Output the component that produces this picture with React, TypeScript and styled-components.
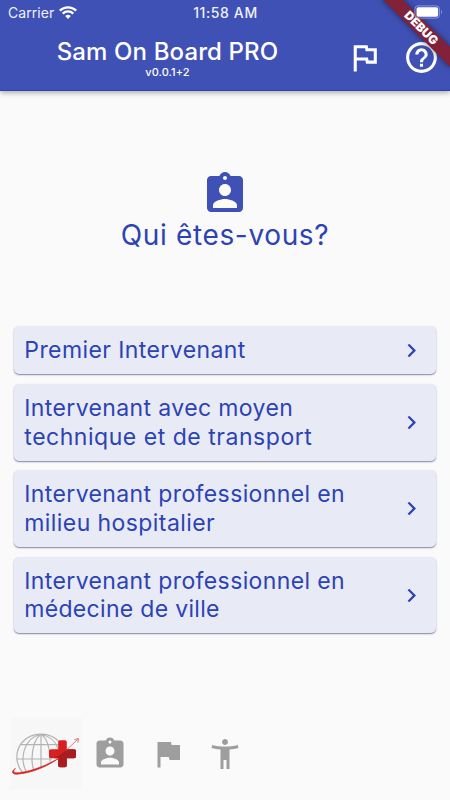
import React from "react";
import styled, { createGlobalStyle } from "styled-components";

const indigo = "#3f51b5";
const ink = "#2c43b4";

const GlobalStyle = createGlobalStyle`
  * { box-sizing: border-box; }
  body { margin: 0; background: #fafafa; font-family: Inter, "Liberation Sans", sans-serif; }
`;

const Screen = styled.div`
  width: 450px;
  height: 800px;
  position: relative;
  overflow: hidden;
  display: flex;
  flex-direction: column;
  background: #fafafa;
`;

const Header = styled.header`
  height: 91px;
  flex: none;
  background: ${indigo};
  color: #fff;
  border-bottom: 1px solid #2b44b2;
  box-shadow: 0 2px 5px rgba(0, 0, 0, 0.3);
`;

const StatusBar = styled.div`
  height: 24px;
  padding: 1px 7px 0 8px;
  display: grid;
  grid-template-columns: 1fr auto 1fr;
  align-items: center;
  color: #eef0fb;
  font-size: 14px;
  line-height: 24px;
`;

const Carrier = styled.div`
  display: flex;
  align-items: center;
  gap: 5px;
  letter-spacing: 0.05px;
`;

const Clock = styled.div`
  font-weight: 500;
  font-size: 14px;
  letter-spacing: 0.6px;
`;

const BatterySlot = styled.div`
  display: flex;
  justify-content: flex-end;
  position: relative;
  z-index: 3;
  top: -1px;
`;

const TitleBar = styled.div`
  height: 66px;
  display: flex;
`;

const Titles = styled.div`
  width: 335px;
  padding-top: 13px;
  display: flex;
  flex-direction: column;
  align-items: center;
`;

const Title = styled.h1`
  margin: 0;
  font-size: 24px;
  line-height: 29px;
  font-weight: 500;
  letter-spacing: 0.12px;
  white-space: nowrap;
`;

const Version = styled.div`
  font-size: 11px;
  line-height: 13px;
  font-weight: 500;
  letter-spacing: 0.1px;
`;

const Actions = styled.div`
  display: flex;
  gap: 20px;
  padding: 15px 0 0 11px;
`;

const Banner = styled.div`
  position: absolute;
  z-index: 2;
  top: 21.35px;
  left: 373.15px;
  width: 96px;
  height: 14.4px;
  transform: rotate(45deg);
  background: #81213a;
  box-shadow: 0 0 6px rgba(0, 0, 0, 0.5);
  color: #fff;
  font-size: 12px;
  line-height: 14.4px;
  font-weight: 900;
  text-align: center;
`;

const Intro = styled.section`
  height: 235.2px;
  flex: none;
  padding-top: 79px;
  display: flex;
  flex-direction: column;
  align-items: center;
`;

const Question = styled.h2`
  margin: 0;
  color: ${ink};
  font-size: 28px;
  line-height: 34px;
  font-weight: 400;
  letter-spacing: 0.65px;
`;

const Choices = styled.main`
  padding: 0 14px;
  display: flex;
  flex-direction: column;
  gap: 9.6px;
`;

const Choice = styled.button`
  border: 0;
  margin: 0;
  width: 100%;
  padding: 10px 11.5px 9.2px 10.3px;
  display: flex;
  align-items: center;
  justify-content: space-between;
  border-radius: 5px;
  background: #e8eaf6;
  box-shadow: 0 1px 1.5px rgba(50, 55, 110, 0.6);
  color: ${ink};
  font-family: inherit;
  font-size: 23px;
  line-height: 28.8px;
  font-weight: 400;
  text-align: left;
`;

const Label = styled.span`
  display: flex;
  flex-direction: column;
`;

const Line = styled.span<{ $tracking: number }>`
  white-space: nowrap;
  letter-spacing: ${(p) => p.$tracking}px;
`;

const Chevron = styled.svg`
  width: 27px;
  height: 27px;
  flex: none;
`;

const Footer = styled.footer`
  margin-top: auto;
  height: 82px;
  padding-left: 10px;
  display: flex;
`;

const LogoBox = styled.div`
  width: 72px;
  height: 72px;
  background: #f7f7f7;
`;

const FooterIcons = styled.nav`
  padding: 18px 0 0 10.4px;
  display: flex;
  gap: 21.5px;
`;

const paths = {
  badge:
    "M19 3h-4.18C14.4 1.84 13.3 1 12 1c-1.3 0-2.4.84-2.82 2H5c-1.1 0-2 .9-2 2v14c0 1.1.9 2 2 2h14c1.1 0 2-.9 2-2V5c0-1.1-.9-2-2-2zm-7 0c.55 0 1 .45 1 1s-.45 1-1 1-1-.45-1-1 .45-1 1-1zm0 4c1.66 0 3 1.34 3 3s-1.34 3-3 3-3-1.34-3-3 1.34-3 3-3zm6 12H6v-1.4c0-2 4-3.1 6-3.1s6 1.1 6 3.1V19z",
  flag: "M14.4 6L14 4H5v17h2v-7h5.6l.4 2h7V6z",
  flagOutline:
    "M12.36 6l.4 2H18v6h-3.36l-.4-2H7V6h5.36M14 4H5v17h2v-7h5.6l.4 2h7V6h-5.6L14 4z",
  help: "M11 18h2v-2h-2v2zm1-16C6.48 2 2 6.48 2 12s4.48 10 10 10 10-4.48 10-10S17.52 2 12 2zm0 18c-4.41 0-8-3.59-8-8s3.59-8 8-8 8 3.59 8 8-3.59 8-8 8zm0-14c-2.21 0-4 1.79-4 4h2c0-1.1.9-2 2-2s2 .9 2 2c0 2-3 1.75-3 5h2c0-2.25 3-2.5 3-5 0-2.21-1.79-4-4-4z",
  person:
    "M20.5 6c-2.61.7-5.67 1-8.5 1s-5.89-.3-8.5-1L3 8c1.86.5 4 .83 6 1v13h2v-6h2v6h2V9c2-.17 4.14-.5 6-1l-.5-2zM12 6c1.1 0 2-.9 2-2s-.9-2-2-2-2 .9-2 2 .9 2 2 2z",
};

function Icon({ name, size = 36, color = "#9e9e9e" }: { name: keyof typeof paths; size?: number; color?: string }) {
  return (
    <svg width={size} height={size} viewBox="0 0 24 24" fill={color}>
      <path d={paths[name]} />
    </svg>
  );
}

function Wifi() {
  return (
    <svg width="18" height="14" viewBox="0 0 18 14" fill="none" stroke="#fff" strokeWidth="2.2">
      <path d="M.8 4.6a11.8 11.8 0 0 1 16.4 0M3.7 7.6a7.6 7.6 0 0 1 10.6 0" />
      <path d="M6.2 10.1a4 4 0 0 1 5.6 0L9 13z" fill="#fff" stroke="none" />
    </svg>
  );
}

function Battery() {
  return (
    <svg width="29" height="14" viewBox="0 0 29 14">
      <rect x=".9" y=".9" width="24.5" height="12.2" rx="3" fill="none" stroke="#8b98df" strokeWidth="1" />
      <rect x="2.5" y="2.3" width="21.6" height="9.5" rx="1.7" fill="#fff" />
      <path d="M27 4.7q2 2.3 0 4.6z" fill="#8b98df" />
    </svg>
  );
}

function GlobeLogo() {
  return (
    <svg width="72" height="72" viewBox="0 0 72 72" fill="none">
      <g stroke="#b3b3b3" strokeWidth="1.2">
        <path d="M12.5 54.5C5.5 46 4.5 33 12.5 24C22 13.5 40 13.500 50 24.500" />
        <path d="M11 26.700H49M7 41H42M31 16.500V49" />
        <path d="M31 16.500C20 18 13 29 13 41C13 46 14 50 16.500 54M31 16.500C25 20 22 31 22 41C22 46 22.500 49 24 52" />
        <path d="M31 16.500C37 20 40 31 40 44M31 16.500C40 18 46 24 48 31" />
      </g>
      <path d="M50 22.200h5q1.800 0 1.800 1.800v7.300H64q2 0 2 1.800v5.400q0 1.800-2 1.800h-7.200v7.200q0 1.800-1.800 1.800h-5q-1.800 0-1.800-1.800v-7.200H41q-2 0-2-1.800v-5.400q0-1.800 2-1.800h7.200V24q0-1.800 1.800-1.800z" fill="#d7201f" />
      <path d="M43.500 40.300C49 38 53 35 56.800 31.300H64q2 0 2 1.800v5.400q0 1.800-2 1.800h-7.200v7.200q0 1.800-1.800 1.800h-5q-1.800 0-1.800-1.800v-7.200z" fill="#a91d20" />
      <path d="M5.500 50.300C.5 53.500 2 57.300 9 56C24 54.500 39 47.500 50 39.500C38 46.500 23 53 9 54.700C3.500 55.200 2.500 53.500 5.500 50.300z" fill="#d7201f" stroke="#d7201f" strokeWidth=".6" />
      <path d="M56 32.500L67.500 21.500M64.300 21.700l4.200-1.200-.7 4.200" stroke="#cf5a58" strokeWidth=".8" />
    </svg>
  );
}

type TextLine = { text: string; tracking: number };

const choices: TextLine[][] = [
  [{ text: "Premier Intervenant", tracking: 0.41 }],
  [
    { text: "Intervenant avec moyen", tracking: 0.38 },
    { text: "technique et de transport", tracking: 0.53 },
  ],
  [
    { text: "Intervenant professionnel en", tracking: 0.38 },
    { text: "milieu hospitalier", tracking: 0.42 },
  ],
  [
    { text: "Intervenant professionnel en", tracking: 0.38 },
    { text: "médecine de ville", tracking: 0.31 },
  ],
];

export default function App() {
  return (
    <Screen>
      <GlobalStyle />
      <Header>
        <StatusBar>
          <Carrier>Carrier <Wifi /></Carrier>
          <Clock>11:58 AM</Clock>
          <BatterySlot><Battery /></BatterySlot>
        </StatusBar>
        <TitleBar>
          <Titles>
            <Title>Sam On Board PRO</Title>
            <Version>v0.0.1+2</Version>
          </Titles>
          <Actions>
            <Icon name="flagOutline" size={37} color="#fff" />
            <Icon name="help" size={37} color="#fff" />
          </Actions>
        </TitleBar>
      </Header>
      <Banner>DEBUG</Banner>
      <Intro>
        <Icon name="badge" size={48} color={indigo} />
        <Question>Qui êtes-vous?</Question>
      </Intro>
      <Choices>
        {choices.map((lines, index) => (
          <Choice key={index}>
            <Label>
              {lines.map((line) => (
                <Line key={line.text} $tracking={line.tracking}>{line.text}</Line>
              ))}
            </Label>
            <Chevron viewBox="0 0 24 24" fill={ink}>
              <path d="M10 6L8.59 7.41 13.17 12l-4.58 4.59L10 18l6-6z" />
            </Chevron>
          </Choice>
        ))}
      </Choices>
      <Footer>
        <LogoBox><GlobeLogo /></LogoBox>
        <FooterIcons>
          <Icon name="badge" />
          <Icon name="flag" />
          <Icon name="person" />
        </FooterIcons>
      </Footer>
    </Screen>
  );
}
